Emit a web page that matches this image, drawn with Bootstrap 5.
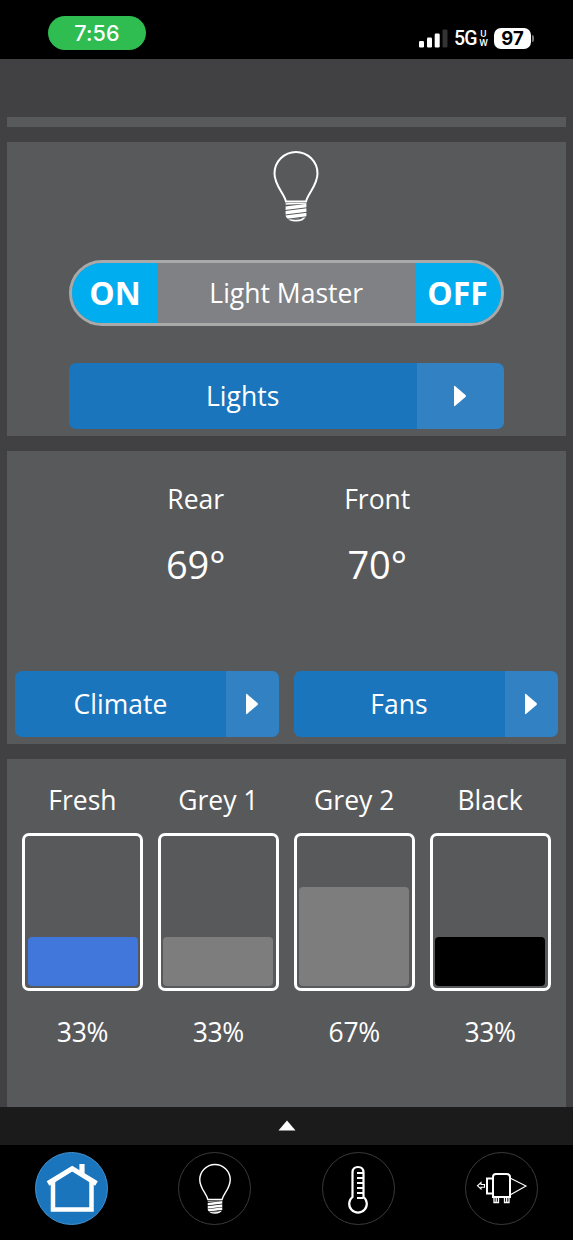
<!DOCTYPE html>
<html lang="en">
<head>
<meta charset="utf-8">
<meta name="viewport" content="width=device-width, initial-scale=1">
<title>Coach control</title>
<link href="https://cdn.jsdelivr.net/npm/bootstrap@5.3.0/dist/css/bootstrap.min.css" rel="stylesheet">
<style>
body{background:#414042;color:#fff;font-family:"Open Sans",sans-serif;font-size:26.5px;line-height:36px;height:1240px;overflow:hidden}
svg{display:block;flex:none}
.status{height:59px;background:#000;font-family:Inter,"Liberation Sans",sans-serif}
.clock{width:98px;height:34px;margin:15.5px 0 0 48px;background:#2fbd51;font-size:21.5px;font-weight:500;letter-spacing:.2px}
.signals{margin:27px 39px 0 0;height:22px}
.net{font-family:Roboto,sans-serif;font-size:19.5px;line-height:22px;letter-spacing:-.8px;font-weight:500;margin:2px 0 0 6px;width:23px}
.net-uw{font-size:8.5px;line-height:9px;font-weight:600;width:9px;margin:1px 6px 0 2px}
.net-uw span{height:9px}
.batt{width:37px;height:21px;border-radius:7px;background:#fff;color:#000;font-size:18.5px;font-weight:700;line-height:21px}
.batt-tip{width:2px;height:7px;border-radius:0 2px 2px 0;background:#777;margin-left:1px}
.pane{background:#58595b;margin:0 7.5px 15px 7px}
.strip{margin-top:58px;height:10px}
.pane-light{height:293.5px;padding:8px 62px 0 62px}
.bulb-box{padding-left:18.5px}
.pane-climate{height:293.5px}
.pane-tanks{height:348px;margin-bottom:0;padding:0 7.5px}
.master{height:66px;margin-top:37.5px;border:3px solid #a9a9a9;border-radius:33px;background:#808184}
.master-end{width:86px;background:#00aeef;font-weight:700;font-size:32px}
.go{height:66px;border-radius:7px;background:#1b75bc;color:#fff;font-size:26.5px;line-height:36px;letter-spacing:.05px}
.go-tip{background:#3282c3;padding-right:1px}
.wide{margin-top:37px}
.wide .go-tip{width:87px}
.pair{gap:14.5px;padding:0 8px;margin-top:80.5px}
.pair .go-tip{width:53px}
.zones{width:363px;margin:0 auto 0 98px;padding-top:30px}
.temp{font-size:38px;line-height:52px;margin-top:21.5px}
.tank{padding:0 7.5px}
.tank-name{padding-top:23px}
.vessel{height:158px;margin-top:14.5px;border:3px solid #fff;border-radius:7px;padding:0 2.5px 1.5px;width:121px}
.fill{border-radius:4px;background:#7d7d7d}
.fill-fresh{background:#4177da}
.fill-black{background:#000}
.percent{margin-top:23px;letter-spacing:-.3px}
.drawer-bar{height:37.5px;background:#1b1b1b}
.dock{height:95.5px;background:#000;padding:7.5px 35px 0}
.dock-btn{width:73px;height:73px;border:1.5px solid #3a3a3a}
.dock-btn.on{background:#1b75bc;border-color:#4391d0}
</style>
</head>
<body>
<svg width="0" height="0" class="position-absolute" aria-hidden="true">
<defs>
<clipPath id="screw"><path d="M13.6 53H34.4V66Q32 71.500 24 71.500T13.600 66Z"/></clipPath>
<symbol id="bulb" viewBox="0 0 48 72">
<path d="M14 51.500C12 43 2.500 35.500 2.500 23.500A21.500 21.500 0 0 1 45.500 23.500C45.500 35.500 36 43 34 51.500Z" fill="none" stroke="#fff" stroke-width="2"/>
<g clip-path="url(#screw)" stroke="#fff" fill="none"><path d="M12 54L36 53" stroke-width="1.500"/><path d="M12 58.300L36 55.300M12 62.800L36 59.800M12 67.300L36 64.300" stroke-width="3.500"/><path d="M12 70L36 67V73H12Z" fill="#fff" stroke="none"/></g>
<path d="M18.500 69.300L31 67.800Q28 70.500 18.500 69.300Z" fill="#444"/>
</symbol>
<symbol id="play" viewBox="0 0 14 22"><path d="M1 1.500Q1 .3 2.200 1.200L12.500 10Q13.500 11 12.500 12L2.200 20.800Q1 21.700 1 20.500Z" fill="#fff"/></symbol>
</defs>
</svg>
<header class="status d-flex justify-content-between">
<div class="clock rounded-pill d-flex align-items-center justify-content-center">7:56</div>
<div class="signals d-flex align-items-center">
<svg width="29" height="19" viewBox="0 0 29 19"><g fill="#fff"><rect y="12" width="5" height="6.500" rx="1.200"/><rect x="8" y="8.500" width="5" height="10" rx="1.200"/><rect x="15.700" y="4.500" width="5" height="14" rx="1.200"/></g><rect x="23.500" y=".5" width="5" height="18" rx="1.200" fill="#333"/></svg>
<span class="net">5G</span>
<span class="net-uw d-flex flex-column align-items-center"><span>U</span><span>W</span></span>
<span class="batt text-center">97</span><span class="batt-tip"></span>
</div>
</header>
<main>
<div class="pane strip"></div>
<section class="pane pane-light">
<div class="bulb-box d-flex justify-content-center"><svg width="48" height="72"><use href="#bulb"/></svg></div>
<div class="master d-flex overflow-hidden">
<div class="master-end d-flex align-items-center justify-content-center">ON</div>
<div class="flex-fill d-flex align-items-center justify-content-center">Light Master</div>
<div class="master-end d-flex align-items-center justify-content-center">OFF</div>
</div>
<a href="#" class="go wide d-flex text-decoration-none overflow-hidden"><span class="flex-fill d-flex align-items-center justify-content-center">Lights</span><span class="go-tip d-flex align-items-center justify-content-center"><svg width="14" height="22"><use href="#play"/></svg></span></a>
</section>
<section class="pane pane-climate">
<div class="zones d-flex text-center">
<div class="col-6"><div>Rear</div><div class="temp">69°</div></div>
<div class="col-6"><div>Front</div><div class="temp">70°</div></div>
</div>
<div class="pair d-flex">
<a href="#" class="go col d-flex text-decoration-none overflow-hidden"><span class="flex-fill d-flex align-items-center justify-content-center">Climate</span><span class="go-tip d-flex align-items-center justify-content-center"><svg width="14" height="22"><use href="#play"/></svg></span></a>
<a href="#" class="go col d-flex text-decoration-none overflow-hidden"><span class="flex-fill d-flex align-items-center justify-content-center">Fans</span><span class="go-tip d-flex align-items-center justify-content-center"><svg width="14" height="22"><use href="#play"/></svg></span></a>
</div>
</section>
<section class="pane pane-tanks d-flex text-center">
<div class="tank col-3"><div class="tank-name">Fresh</div><div class="vessel d-flex flex-column justify-content-end"><div class="fill fill-fresh" style="height:32.500%"></div></div><div class="percent">33%</div></div>
<div class="tank col-3"><div class="tank-name">Grey 1</div><div class="vessel d-flex flex-column justify-content-end"><div class="fill" style="height:32.500%"></div></div><div class="percent">33%</div></div>
<div class="tank col-3"><div class="tank-name">Grey 2</div><div class="vessel d-flex flex-column justify-content-end"><div class="fill" style="height:65.800%"></div></div><div class="percent">67%</div></div>
<div class="tank col-3"><div class="tank-name">Black</div><div class="vessel d-flex flex-column justify-content-end"><div class="fill fill-black" style="height:32.500%"></div></div><div class="percent">33%</div></div>
</section>
</main>
<div class="drawer-bar d-flex align-items-center justify-content-center"><svg width="18" height="11" viewBox="0 0 18 11"><path d="M9 .5L17.500 10.500H.5Z" fill="#fff"/></svg></div>
<nav class="dock d-flex justify-content-between">
<a href="#" class="dock-btn on rounded-circle d-flex align-items-center justify-content-center" aria-label="Home">
<svg width="72" height="72" viewBox="0 0 72 72" fill="none" stroke="#fff"><path d="M17 28V56.500H55.500V28" stroke-width="4.500"/><path d="M12 30.500L36.200 15.700L60.500 30.500" stroke-width="5"/><path d="M46 21V11" stroke-width="5.200"/></svg></a>
<a href="#" class="dock-btn rounded-circle d-flex align-items-center justify-content-center" aria-label="Lights"><svg width="34" height="51"><use href="#bulb"/></svg></a>
<a href="#" class="dock-btn rounded-circle d-flex align-items-center justify-content-center" aria-label="Climate">
<svg width="72" height="72" viewBox="0 0 72 72" fill="none" stroke="#fff" stroke-width="2.200"><path d="M30.500 44V19.500Q30.500 14 36 14T41.500 19.500V44A8.800 8.800 0 1 1 30.500 44Z"/><path d="M35 20H41.500M35 25H41.500M35 30H41.500M35 35H41.500M35 40H41.500M35 45H41.500"/></svg></a>
<a href="#" class="dock-btn rounded-circle d-flex align-items-center justify-content-center" aria-label="Coach">
<svg width="72" height="72" viewBox="0 0 72 72" fill="none" stroke="#fff"><path d="M28 44V24Q28 21 31 21H41.500Q45 21 45 24V44Z" stroke-width="2"/><path d="M28 25.500H22V40.500H28" stroke-width="2"/><path d="M45 25L61 33L45 42" stroke-width="1.100"/><path d="M19.500 31.500H16V29.500L12.500 32.800L16 36V34.200H19.500Z" stroke-width="1.100"/><path d="M29 45V49.500H33.500V45M31.200 45V49.500M39.500 45V49.500H44V45M41.700 45V49.500" stroke-width="1.300"/></svg></a>
</nav>
<script src="https://cdn.jsdelivr.net/npm/bootstrap@5.3.0/dist/js/bootstrap.bundle.min.js"></script>
</body>
</html>
